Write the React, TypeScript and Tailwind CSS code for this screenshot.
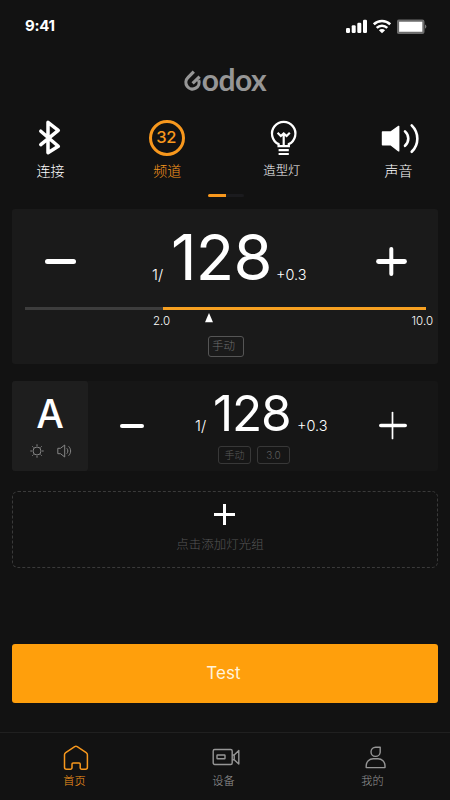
import { useState } from "react"
import type { ReactNode } from "react"

const CJK = "font-['Inter','Noto_Sans_CJK_SC',sans-serif]"

function StatusBar() {
  return (
    <div className="flex h-[66px] items-start justify-between pl-[25px] pr-[23px] pt-[17px] text-white">
      <span className="text-[15px] leading-[18px] font-bold tracking-[-0.3px]">9:41</span>
      <div className="flex items-start gap-[6px] pt-[2px]">
        <svg width="21" height="15" viewBox="0 0 21 15" fill="currentColor">
          <rect x="0" y="9" width="4" height="5" rx="1.2" />
          <rect x="5.7" y="6.3" width="4" height="7.7" rx="1.2" />
          <rect x="11.3" y="3.8" width="4" height="10.2" rx="1.2" />
          <rect x="17" y="0.8" width="4" height="13.2" rx="1.2" />
        </svg>
        <svg width="18" height="15" viewBox="0 0 18 15" fill="none" stroke="currentColor" strokeWidth="2.5">
          <path d="M0.8 5.300a11.700 11.700 0 0 1 16.400 0" />
          <path d="M3.700 8.900a7.500 7.500 0 0 1 10.600 0" />
          <path d="M5.900 11.200a4.400 4.400 0 0 1 6.200 0L9 14.200Z" fill="currentColor" stroke="none" />
        </svg>
        <svg width="30" height="15" viewBox="0 0 30 15">
          <rect x="1" y="1.7" width="25.400" height="12.200" rx="1" fill="#fff" stroke="#6c6c6c" strokeWidth="2.200" />
          <path d="M28 5.500v4.200a2.300 2.300 0 0 0 0-4.200Z" fill="#777" />
        </svg>
      </div>
    </div>
  )
}

function Logo() {
  return (
    <div className="flex h-[50px] justify-center text-[#969696]" aria-label="Godox">
      <svg width="18" height="26" viewBox="0 0 18 26" fill="none" stroke="currentColor" strokeWidth="3.2">
        <path d="M9.800 5.600 3.900 11.700a6.600 6.600 0 1 0 10.800 2.400M15.600 10.600 8.600 17.400" />
      </svg>
      <span className="font-['Lato',sans-serif] text-[30px] leading-[27px] font-bold tracking-[-0.5px]">odox</span>
    </div>
  )
}

function BluetoothIcon() {
  return (
    <svg width="60" height="40" viewBox="0 0 60 40" fill="none" stroke="currentColor" strokeWidth="3.5" strokeLinecap="round" strokeLinejoin="round">
      <path d="M20.800 13.200 38.300 28.300 28 34.700V4.300l10.300 8L20.800 26.700" />
    </svg>
  )
}

function ChannelIcon() {
  return (
    <div className="flex h-10 w-[60px] justify-center pt-[3px]">
      <div className="-mt-px h-9 w-9 rounded-full border-[3px] pr-px text-center text-[16.5px] leading-[29px] font-medium tracking-[-0.3px]">32</div>
    </div>
  )
}

function BulbIcon() {
  return (
    <svg width="60" height="40" viewBox="0 0 60 40" fill="none" stroke="currentColor" strokeWidth="2.3">
      <path d="M25.600 28.200v-2.100a11.700 11.700 0 1 1 10.200 0v2.100Z" />
      <path d="M25.600 32.200h10.200M25.600 36h10.200" strokeWidth="2.200" />
      <path d="M30.700 28V16M24.600 14.800l3.200 3.200 2.900-2.600 2.900 2.600 3.200-3.200" strokeWidth="2.200" />
    </svg>
  )
}

function SoundIcon() {
  return (
    <svg width="60" height="40" viewBox="0 0 60 40" fill="none" stroke="currentColor" strokeWidth="2.600" strokeLinecap="round">
      <path d="M12.500 14h8.200l8-5.600v24.500l-8-6.100h-8.200Z" fill="currentColor" strokeWidth="1.400" strokeLinejoin="round" />
      <path d="M35 13.400c4.400 4 4.400 10.400 0 14.400" />
      <path d="M41.700 7.400c7.500 7.600 7.500 19 0 26.400" />
    </svg>
  )
}

function Shortcut({ icon, label, className }: { icon: ReactNode; label: string; className?: string }) {
  return (
    <button className={`flex w-[60px] flex-col items-center text-[14px] leading-[20px] font-light ${className ?? ""}`}>
      {icon}
      <span className="mt-[3px] whitespace-nowrap">{label}</span>
    </button>
  )
}

function HomeIcon() {
  return (
    <svg className="ml-[3px]" width="26" height="26" viewBox="0 0 26 26" fill="none" stroke="currentColor" strokeWidth="1.500" strokeLinejoin="round">
      <path d="M3.500 24.200a2 2 0 0 1-2-2V9.800c0-1 .4-1.700 1.200-2.200l9-5.900c.9-.5 1.600-.5 2.500 0l9 5.900c.8.500 1.200 1.200 1.200 2.200v12.400a2 2 0 0 1-2 2h-3.700a1.500 1.500 0 0 1-1.500-1.500v-3.700c0-.7-.4-1.100-1.100-1.100h-6c-.7 0-1.100.4-1.100 1.100v3.700a1.500 1.500 0 0 1-1.500 1.500Z" />
    </svg>
  )
}

function CameraIcon() {
  return (
    <svg className="ml-[4px]" width="28" height="26" viewBox="0 0 28 26" fill="none" stroke="currentColor" strokeWidth="1.400" strokeLinejoin="round">
      <rect x="1.200" y="4.500" width="19" height="15" rx="1.500" />
      <rect x="5" y="10" width="8" height="3.800" rx=".5" />
      <path d="M20.200 10h2L26.800 5.500V19l-4.600-4.200h-2M22.200 10v4.800" />
    </svg>
  )
}

function UserIcon() {
  return (
    <svg className="ml-[6px]" width="22" height="26" viewBox="0 0 22 26" fill="none" stroke="currentColor" strokeWidth="1.400" strokeLinejoin="round">
      <path d="M15.200 2.200v5a4.600 4.600 0 1 1-4.600-5Z" />
      <path d="M1.200 22.600v-1.800a7 7 0 0 1 7-7h4.800a7 7 0 0 1 7 7v1.800Z" />
    </svg>
  )
}

const tabs = [
  { label: "首页", icon: <HomeIcon /> },
  { label: "设备", icon: <CameraIcon /> },
  { label: "我的", icon: <UserIcon /> },
]

export default function App() {
  const [active, setActive] = useState(0)

  return (
    <div className={`flex h-[800px] w-[450px] flex-col overflow-hidden bg-[#121212] text-white ${CJK}`}>
      <StatusBar />
      <Logo />

      {/* Shortcuts */}
      <div className="flex h-[78px] justify-between px-5 pt-[2px]">
        <Shortcut icon={<BluetoothIcon />} label="连接" className="[&>span]:ml-px" />
        <Shortcut icon={<ChannelIcon />} label="频道" className="text-[#f8981d] [&>span]:ml-px" />
        <Shortcut icon={<BulbIcon />} label="造型灯" className="[&>span]:mr-[3px] [&>span]:text-[12.3px]" />
        <Shortcut icon={<SoundIcon />} label="声音" className="[&>span]:mr-[3px]" />
      </div>
      <div className="flex h-[15px] pl-[208px]">
        <div className="h-[3px] w-[18px] rounded-l-full bg-[#f8981d]" />
        <div className="h-[3px] w-[18px] rounded-r-full bg-[#1b1b1e]" />
      </div>

      {/* All groups */}
      <section className="mx-3 h-[155px] rounded-[3px] bg-[#1a1a1a]">
        <div className="flex h-[98px] pl-[33px] pt-[20px]">
          <button className="mt-[30px] h-[5px] w-[31px] rounded-full bg-white" />
          <div className="-mt-[4px] flex h-[64px] w-[300px] items-baseline pl-[76px]">
            <span className="w-[19px] text-[15px] font-light">1/</span>
            <span className="w-[105px] text-[63px] leading-[64px] tracking-[-0.8px]">128</span>
            <span className="text-[14.5px] font-light">+0.3</span>
          </div>
          <svg className="mt-[17px]" width="31" height="31" viewBox="0 0 31 31" stroke="#fff" strokeLinecap="round">
            <path d="M2.500 15.500h26" strokeWidth="4.800" />
            <path d="M15.300 3v25" strokeWidth="4" />
          </svg>
        </div>
        <div className="mr-[12px] ml-[13px] flex h-[3px]">
          <div className="w-[138px] bg-[#3d3d3d]" />
          <div className="flex-1 bg-[#f6a021]" />
        </div>
        <div className="flex h-[26px] pl-[141px] pr-[5px] pt-[3px] text-[11.5px] leading-[16px] font-light">
          <span className="w-[51px]">2.0</span>
          <svg width="10" height="10" viewBox="0 0 10 10" fill="#fff">
            <path d="M5 0 9 9.200H1Z" />
          </svg>
          <span className="ml-auto">10.0</span>
        </div>
        <div className="ml-[196px] h-[21px] w-9 rounded-[3px] border border-[#555] pl-[3px] text-[11.5px] leading-[18px] font-light text-[#6c6c6c]">手动</div>
      </section>

      {/* Group A */}
      <section className="mx-3 mt-[17px] flex h-[90px] rounded-[3px] bg-[#161616]">
        <div className="flex w-[76px] flex-col items-center rounded-[3px] bg-[#1e1e1e]">
          <span className="mt-[13px] h-[50px] text-[39px] leading-[40px] font-medium">A</span>
          <div className="ml-[2px] flex gap-[13px] text-[#858585]">
            <svg width="14" height="14" viewBox="0 0 14 14" fill="none" stroke="currentColor" strokeWidth="1">
              <circle cx="7" cy="7" r="4" />
              <path d="M7 .3v1.700M7 12v1.700M.3 7H2M12 7h1.700M2.300 2.300l1.200 1.200M10.500 10.500l1.200 1.200M2.300 11.700l1.200-1.200M10.500 3.500l1.200-1.200" />
            </svg>
            <svg width="15" height="14" viewBox="0 0 15 14" fill="none" stroke="currentColor" strokeWidth="1">
              <path d="M.8 4.300h2.700L7.700 1v12L3.500 9.700H.8Z" />
              <path d="M9.800 4.300c1.400 1.500 1.400 3.900 0 5.400M11.600 2.300c2.700 2.700 2.700 6.700 0 9.400" />
            </svg>
          </div>
        </div>
        <div className="pl-[32px] pt-[43px]">
          <button className="block h-[4px] w-6 rounded-full bg-white" />
        </div>
        <div className="w-[235px] pl-[51px] pt-[7px]">
          <div className="flex h-[58px] items-baseline">
            <span className="w-[18px] text-[15px] font-light">1/</span>
            <span className="w-[84px] text-[49.5px] leading-[50px] tracking-[-1.2px]">128</span>
            <span className="text-[14.5px] font-light">+0.3</span>
          </div>
          <div className="ml-[23px] flex gap-[6px] text-center text-[10px] leading-[16px] font-light text-[#5c5c5c]">
            <div className="h-[18px] w-[33px] rounded-[3px] border border-[#383838]">手动</div>
            <div className="h-[18px] w-[33px] rounded-[3px] border border-[#383838]">3.0</div>
          </div>
        </div>
        <svg className="mt-[30px]" width="28" height="29" viewBox="0 0 28 29" stroke="#fff" strokeLinecap="round">
          <path d="M1.800 14.500h24.400" strokeWidth="3.600" />
          <path d="M13.500 1.500v26" strokeWidth="1.700" />
        </svg>
      </section>

      {/* Add group */}
      <button className="mx-3 mt-[20px] flex h-[77px] flex-col items-center rounded-md border border-dashed border-[#3a3a3a] pt-[12px]">
        <svg className="mr-px" width="21" height="21" viewBox="0 0 21 21" stroke="#fff" strokeWidth="3">
          <path d="M0 10.500h21M10.500 0v21" />
        </svg>
        <span className="mt-[11px] mr-[10px] text-[12.5px] leading-[18px] font-light text-[#555]">点击添加灯光组</span>
      </button>

      <button className="mx-3 mt-[76px] h-[59px] rounded-[3px] bg-[#ff9f0c] pr-[3px] text-[17px] tracking-[0.1px] text-[#fff3dc]">Test</button>

      {/* Bottom navigation */}
      <nav className="mt-[29px] flex h-[68px] border-t border-[#202020] pt-[12px]">
        {tabs.map((tab, i) => (
          <button
            key={tab.label}
            onClick={() => setActive(i)}
            className={`flex w-[149px] flex-col items-center text-[11.2px] leading-[16px] font-light ${
              active === i ? "text-[#f8981d]" : "text-[#969696]"
            }`}
          >
            {tab.icon}
            <span className="mt-[2px]">{tab.label}</span>
          </button>
        ))}
      </nav>
    </div>
  )
}
